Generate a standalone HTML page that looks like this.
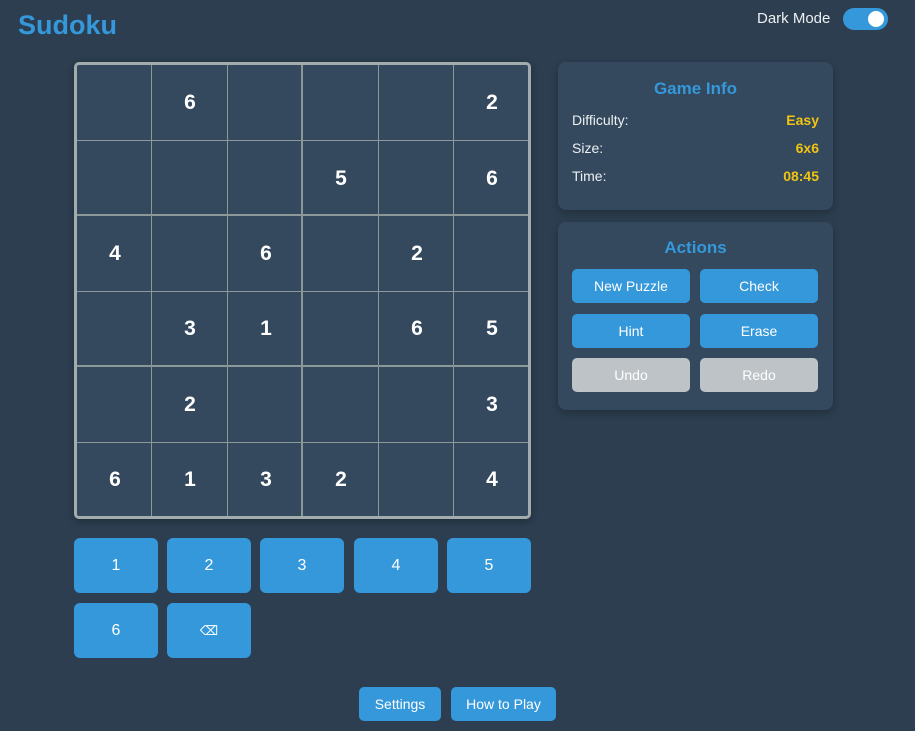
<!DOCTYPE html>
<html><head><style>
*{box-sizing:border-box;margin:0;padding:0}
body{width:915px;height:731px;background:#2c3e50;font-family:"Liberation Sans",sans-serif;position:relative;overflow:hidden;color:#ecf0f1}
.abs{position:absolute}
h1{position:absolute;left:18px;top:10px;font-size:27px;color:#3498db;font-weight:bold}
.dm{position:absolute;left:757px;top:10px;font-size:15px;color:#ecf0f1}
.tog{position:absolute;left:843px;top:8px;width:45px;height:22px;border-radius:11px;background:#3498db}
.tog:after{content:"";position:absolute;right:4px;top:3px;width:16px;height:16px;border-radius:50%;background:#fff}
.grid{position:absolute;left:74px;top:62px;width:457px;height:457px;border:3px solid #a3acac;border-radius:5px;background:#34495e;box-shadow:0 2px 8px rgba(0,0,0,.3)}
.c{position:absolute;width:76px;height:76px;display:flex;align-items:center;justify-content:center;font-size:21px;font-weight:bold;color:#fff}
.vl{position:absolute;top:0;bottom:0;background:#8c9898}
.hl{position:absolute;left:0;right:0;background:#8c9898}
.panel{position:absolute;left:558px;width:275px;background:#34495e;border-radius:8px;box-shadow:0 3px 8px rgba(0,0,0,.25)}
.panel h2{text-align:center;font-size:17px;color:#3498db;font-weight:bold}
.row{position:absolute;left:14px;right:14px;font-size:14px;display:flex;justify-content:space-between}
.row b{color:#f1c40f}
.btn{position:absolute;background:#3498db;color:#fff;border-radius:5px;display:flex;align-items:center;justify-content:center;font-size:14px}
.g{background:#bdc3c7}
.nb{position:absolute;width:84px;height:55px;background:#3498db;border-radius:6px;display:flex;align-items:center;justify-content:center;font-size:16px;color:#fff}
</style></head><body>
<h1>Sudoku</h1>
<div class="dm">Dark Mode</div>
<div class="tog"></div>
<div class="grid">
<div class="vl" style="left:74px;width:1px"></div>
<div class="vl" style="left:150px;width:1px"></div>
<div class="vl" style="left:224px;width:2px"></div>
<div class="vl" style="left:301px;width:1px"></div>
<div class="vl" style="left:376px;width:1px"></div>
<div class="hl" style="top:75px;height:1px"></div>
<div class="hl" style="top:149px;height:2px"></div>
<div class="hl" style="top:226px;height:1px"></div>
<div class="hl" style="top:300px;height:2px"></div>
<div class="hl" style="top:377px;height:1px"></div>
<div class="c" style="left:75px;top:0">6</div>
<div class="c" style="left:377px;top:0">2</div>
<div class="c" style="left:226px;top:76px">5</div>
<div class="c" style="left:377px;top:76px">6</div>
<div class="c" style="left:0;top:151px">4</div>
<div class="c" style="left:151px;top:151px">6</div>
<div class="c" style="left:302px;top:151px">2</div>
<div class="c" style="left:75px;top:226px">3</div>
<div class="c" style="left:151px;top:226px">1</div>
<div class="c" style="left:302px;top:226px">6</div>
<div class="c" style="left:377px;top:226px">5</div>
<div class="c" style="left:75px;top:302px">2</div>
<div class="c" style="left:377px;top:302px">3</div>
<div class="c" style="left:0;top:377px">6</div>
<div class="c" style="left:75px;top:377px">1</div>
<div class="c" style="left:151px;top:377px">3</div>
<div class="c" style="left:226px;top:377px">2</div>
<div class="c" style="left:377px;top:377px">4</div>
</div>
<div class="panel" style="top:62px;height:148px">
<h2 style="margin-top:17px">Game Info</h2>
<div class="row" style="top:50px"><span>Difficulty:</span><b>Easy</b></div>
<div class="row" style="top:78px"><span>Size:</span><b>6x6</b></div>
<div class="row" style="top:106px"><span>Time:</span><b>08:45</b></div>
</div>
<div class="panel" style="top:222px;height:188px">
<h2 style="margin-top:16px">Actions</h2>
</div>
<div class="btn" style="left:572px;top:269px;width:118px;height:34px">New Puzzle</div>
<div class="btn" style="left:700px;top:269px;width:118px;height:34px">Check</div>
<div class="btn" style="left:572px;top:314px;width:118px;height:34px">Hint</div>
<div class="btn" style="left:700px;top:314px;width:118px;height:34px">Erase</div>
<div class="btn g" style="left:572px;top:358px;width:118px;height:34px">Undo</div>
<div class="btn g" style="left:700px;top:358px;width:118px;height:34px">Redo</div>
<div class="nb" style="left:74px;top:538px">1</div>
<div class="nb" style="left:167px;top:538px">2</div>
<div class="nb" style="left:260px;top:538px">3</div>
<div class="nb" style="left:354px;top:538px">4</div>
<div class="nb" style="left:447px;top:538px">5</div>
<div class="nb" style="left:74px;top:603px">6</div>
<div class="nb" style="left:167px;top:603px;font-size:13px">⌫</div>
<div class="btn" style="left:359px;top:687px;width:82px;height:34px">Settings</div>
<div class="btn" style="left:451px;top:687px;width:105px;height:34px">How to Play</div>
</body></html>
